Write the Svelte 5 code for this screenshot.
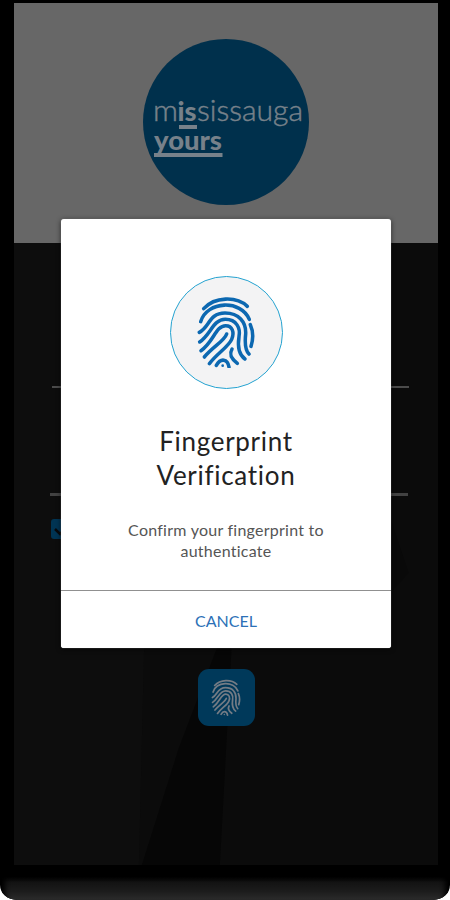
<script>
  const ridges = [
    'M132 122C165 86 230 84 263 115',
    'M123 161C142 98 244 94 269 154',
    'M119 193C150 177 148 135 196 135C237 135 260 162 258 198C255 226 258 248 268 258',
    'M120 222C154 199 160 154 197 154C231 154 243 181 238 206C233 238 241 262 256 273',
    'M124 248C162 222 168 173 198 173C218 173 225 193 216 214C207 236 171 257 149 287',
    'M201 198C194 219 161 235 134 267',
    'M272 170C281 190 280 216 274 235',
    'M217 243C206 262 219 275 233 286',
    'M170 292C183 269 204 272 208 297'
  ];
  const fields = ['upper', 'lower'];
</script>

{#snippet fingerprint()}
  <svg class="print" viewBox="112 84 174 218" aria-hidden="true">
    {#each ridges as d}
      <path {d} />
    {/each}
    <circle cx="189" cy="293" r="4" />
  </svg>
{/snippet}

<div class="stage">
  <div class="phone">
    <div class="screen">
      <header>
        <svg class="logo" viewBox="0 0 166 166" role="img" aria-label="mississauga yours">
          <circle cx="83" cy="83" r="83" />
          <g class="word">
            <text class="light" x="10" y="82" font-size="29" textLength="25" lengthAdjust="spacingAndGlyphs">m</text>
            <text x="34.5" y="82" font-size="27" font-weight="900" textLength="19" lengthAdjust="spacingAndGlyphs">is</text>
            <text class="light" x="54" y="82" font-size="29" textLength="106" lengthAdjust="spacingAndGlyphs">sissauga</text>
            <text x="11" y="110.5" font-size="26" font-weight="900" textLength="68" lengthAdjust="spacingAndGlyphs">yours</text>
            <rect x="36" y="86" width="18" height="4" />
            <rect x="11" y="114" width="68.5" height="4" />
          </g>
        </svg>
      </header>
      <main>
        <svg class="folds" viewBox="0 0 424 622" preserveAspectRatio="none" aria-hidden="true">
          <path d="M0 0H140L125 622H0Z" fill="#0d0d0d" />
          <path d="M205 400H218L206 622H128L165 505Z" fill="#060606" />
          <path d="M330 150L348 190L395 330L330 400Z" fill="#090909" />
        </svg>
        {#each fields as field}
          <div class="field {field}"></div>
        {/each}
        <div class="check">
          <svg viewBox="0 0 20 20"><path d="M4 10l5 5L18 5" /></svg>
        </div>
        <div class="touch">{@render fingerprint()}</div>
      </main>
    </div>
    <div class="chin"></div>
    <div class="overlay">
      <section class="dialog">
        <div class="content">
          <div class="badge">{@render fingerprint()}</div>
          <h1>Fingerprint<br />Verification</h1>
          <p>Confirm your fingerprint to<br />authenticate</p>
        </div>
        <button>CANCEL</button>
      </section>
    </div>
  </div>
</div>

<style>
  :global(body) { background: #fff; }
  .stage {
    width: 450px;
    height: 900px;
    overflow: hidden;
    font-family: Lato, "Open Sans", sans-serif;
  }
  .phone {
    position: relative;
    box-sizing: border-box;
    height: 900px;
    padding: 2.5px 12px 0 14.4px;
    background: #000;
    border-radius: 0 0 17px 17px / 0 0 15px 15px;
    overflow: hidden;
  }
  .screen {
    height: 862px;
    display: flex;
    flex-direction: column;
    background: #0b0b0b;
  }
  header {
    height: 240px;
    box-sizing: border-box;
    padding-top: 36.5px;
    display: flex;
    justify-content: center;
    align-items: flex-start;
    background: #676767;
  }
  .logo { width: 166px; height: 166px; fill: #00304c; }
  .word { fill: #77818a; }
  .light { font-weight: 300; stroke: #77818a; stroke-width: .45; }
  main {
    position: relative;
    flex: 1;
    display: flex;
    flex-direction: column;
  }
  .folds { position: absolute; inset: 0; width: 100%; height: 100%; }
  .field {
    position: relative;
    box-sizing: border-box;
    border-bottom: 2px solid #4b4b4b;
  }
  .upper { height: 145px; margin: 0 29px 0 38px; }
  .lower { height: 108px; margin: 0 30px 0 35.5px; border-bottom-width: 3px; border-color: #424242; }
  .check {
    position: relative;
    width: 20px;
    height: 20px;
    margin: 23px 0 0 36.5px;
    border-radius: 3px;
    background: #003453;
  }
  .check svg { display: block; fill: none; stroke: #09090b; stroke-width: 2.5; }
  .touch {
    position: relative;
    width: 57px;
    height: 57px;
    margin: 130px 0 0 183.5px;
    border-radius: 11px;
    background: #00395a;
    display: grid;
    place-items: center;
  }
  .print { fill: none; stroke: #0c68b1; stroke-width: 10.6; stroke-linecap: round; }
  .print circle { fill: #0c68b1; stroke: none; }
  .touch .print { width: 30px; height: 37px; stroke: #747c85; stroke-width: 10; }
  .touch .print circle { fill: #747c85; }
  .chin {
    height: 32px;
    margin: 12.5px -9.5px 0 -12px;
    box-sizing: border-box;
    background: linear-gradient(#030303 0, #131313 18%, #1c1c1c 45%, #292929 68%, #242424 78%, #000 100%);
    border-radius: 2px 2px 18px 18px;
    box-shadow: inset 5px 0 5px -2px #000, inset -5px 0 5px -2px #000;
  }
  .overlay {
    position: absolute;
    inset: 0;
    display: flex;
    justify-content: center;
    align-items: flex-start;
    padding-top: 218.5px;
  }
  .dialog {
    width: 330px;
    height: 429.5px;
    margin-left: 2px;
    display: flex;
    flex-direction: column;
    background: #fff;
    border-radius: 3px;
    box-shadow: 0 0 1px #aaa, 0 1px 5px rgba(0, 0, 0, .65);
    overflow: hidden;
    text-align: center;
  }
  .content {
    height: 371px;
    box-sizing: border-box;
    padding-top: 57px;
    display: flex;
    flex-direction: column;
    align-items: center;
  }
  .badge {
    box-sizing: border-box;
    width: 113px;
    height: 113px;
    border: 1.5px solid #25a3d1;
    border-radius: 50%;
    background: #f3f3f4;
    display: grid;
    place-items: center;
  }
  .badge .print { width: 58px; height: 72.7px; }
  h1 {
    margin: 35px 0 0;
    font-size: 26px;
    line-height: 34px;
    font-weight: 400;
    letter-spacing: .7px;
    color: #222;
  }
  p {
    margin: 27px 0 0;
    font-size: 16px;
    line-height: 21px;
    letter-spacing: .25px;
    color: #555;
  }
  button {
    flex: 1;
    padding: 3px 0 0;
    border: 0;
    border-top: 1px solid #909090;
    background: #fff;
    color: #2c71b7;
    font: 400 16px Lato, "Open Sans", sans-serif;
  }
</style>
